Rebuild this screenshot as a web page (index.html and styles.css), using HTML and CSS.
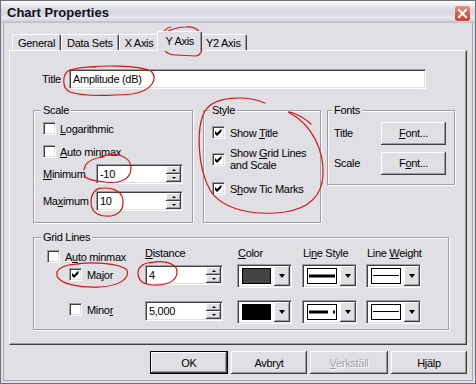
FILE: index.html
```html
<!DOCTYPE html>
<html>
<head>
<meta charset="utf-8">
<title>Chart Properties</title>
<link rel="stylesheet" href="styles.css">
</head>
<body>
<div class="window">
  <div class="titlebar">
    <span class="title">Chart Properties</span>
    <span class="close">
      <svg width="17" height="17" viewBox="0 0 17 17">
        <defs>
          <linearGradient id="cg" x1="0" y1="0" x2="0" y2="1">
            <stop offset="0" stop-color="#e9988a"/>
            <stop offset="0.5" stop-color="#d2604e"/>
            <stop offset="1" stop-color="#c0442f"/>
          </linearGradient>
        </defs>
        <rect x="0.5" y="0.5" width="16" height="16" rx="3" fill="url(#cg)" stroke="#f2e6e6"/>
        <path d="M5 5 L12 12 M12 5 L5 12" stroke="#fff" stroke-width="2" stroke-linecap="square"/>
      </svg>
    </span>
  </div>
  <div class="client">
    <div class="tabs">
      <div class="tab">General</div>
      <div class="tab">Data Sets</div>
      <div class="tab">X Axis</div>
      <div class="tab active">Y Axis</div>
      <div class="tab">Y2 Axis</div>
    </div>
    <div class="panel">
      <div class="title-row">
        <span class="title-label">Title</span>
        <div class="field title-field">Amplitude (dB)</div>
      </div>
      <div class="groups">
        <div class="group scale">
          <div class="legend">Scale</div>
          <div class="group-body">
            <div class="check-row log"><span class="cb"></span><span><u>L</u>ogarithmic</span></div>
            <div class="check-row auto"><span class="cb"></span><span><u>A</u>uto minmax</span></div>
            <div class="num-row min"><span class="num-label"><u>M</u>inimum</span>
              <div class="field spinfield">-10<span class="spin"><span><i class="up"></i></span><span><i class="down"></i></span></span></div>
            </div>
            <div class="num-row max"><span class="num-label">Ma<u>x</u>imum</span>
              <div class="field spinfield">10<span class="spin"><span><i class="up"></i></span><span><i class="down"></i></span></span></div>
            </div>
          </div>
        </div>
        <div class="group style">
          <div class="legend">Style</div>
          <div class="group-body">
            <div class="check-row s1"><span class="cb checked"><svg width="11" height="11" viewBox="0 0 11 11"><polygon points="2,4 4,6 8.5,1.5 8.5,4.5 4,9 2,7"/></svg></span><span>Show <u>T</u>itle</span></div>
            <div class="check-row s2"><span class="cb checked"><svg width="11" height="11" viewBox="0 0 11 11"><polygon points="2,4 4,6 8.5,1.5 8.5,4.5 4,9 2,7"/></svg></span><span class="two-line">Show <u>G</u>rid Lines<br>and Scale</span></div>
            <div class="check-row s3"><span class="cb checked"><svg width="11" height="11" viewBox="0 0 11 11"><polygon points="2,4 4,6 8.5,1.5 8.5,4.5 4,9 2,7"/></svg></span><span>S<u>h</u>ow Tic Marks</span></div>
          </div>
        </div>
        <div class="group fonts">
          <div class="legend">Fonts</div>
          <div class="group-body">
            <div class="font-row f1"><span class="font-label">Title</span><div class="btn font-btn"><span><u>F</u>ont...</span></div></div>
            <div class="font-row f2"><span class="font-label">Scale</span><div class="btn font-btn"><span>F<u>o</u>nt...</span></div></div>
          </div>
        </div>
      </div>
      <div class="group gridlines">
        <div class="legend">Grid Lines</div>
        <div class="grid-table">
          <div class="check-row hdr-auto"><span class="cb"></span><span>A<u>u</u>to minmax</span></div>
          <div class="hdr"><u>D</u>istance</div>
          <div class="hdr hdr-pad"><u>C</u>olor</div>
          <div class="hdr hdr-pad">Li<u>n</u>e Style</div>
          <div class="hdr hdr-pad">Line <u>W</u>eight</div>

          <div class="check-row major"><span class="cb checked"><svg width="11" height="11" viewBox="0 0 11 11"><polygon points="2,4 4,6 8.5,1.5 8.5,4.5 4,9 2,7"/></svg></span><span>Major</span></div>
          <div class="field spinfield dist">4<span class="spin"><span><i class="up"></i></span><span><i class="down"></i></span></span></div>
          <div class="combo"><span class="swatch dark"></span><span class="drop"><i></i></span></div>
          <div class="combo"><span class="item"><svg width="28" height="14" viewBox="0 0 28 14"><rect x="1" y="5.5" width="26" height="3" fill="#000"/></svg></span><span class="drop"><i></i></span></div>
          <div class="combo"><span class="item"><svg width="28" height="14" viewBox="0 0 28 14"><rect x="1" y="6" width="26" height="1" fill="#000"/></svg></span><span class="drop"><i></i></span></div>

          <div class="check-row minor"><span class="cb"></span><span>Mino<u>r</u></span></div>
          <div class="field spinfield dist">5,000<span class="spin"><span><i class="up"></i></span><span><i class="down"></i></span></span></div>
          <div class="combo"><span class="swatch black"></span><span class="drop"><i></i></span></div>
          <div class="combo"><span class="item"><svg width="28" height="14" viewBox="0 0 28 14"><rect x="1" y="5.5" width="19" height="3" fill="#000"/><rect x="25" y="5.5" width="2" height="3" fill="#000"/></svg></span><span class="drop"><i></i></span></div>
          <div class="combo"><span class="item"><svg width="28" height="14" viewBox="0 0 28 14"><rect x="1" y="6" width="26" height="1" fill="#000"/></svg></span><span class="drop"><i></i></span></div>
        </div>
      </div>
    </div>
    <div class="buttons">
      <div class="btn default ok">OK</div>
      <div class="btn cancel">Avbryt</div>
      <div class="btn apply disabled"><span><u>V</u>erkställ</span></div>
      <div class="btn help">Hjälp</div>
    </div>
  </div>
</div>
<svg class="annotations" width="476" height="384" viewBox="0 0 476 384">
  <g fill="none" stroke="#d01818" stroke-width="1.2" stroke-linecap="round">
    <path d="M171,27 C164,28 161,35 162,43 C163,51 168,55 176,55 L196,56 C202,55 204,46 202,37 C200,30 194,26 186,27 C180,27 175,28 168,31"/>
    <path d="M78,68 C100,65 138,65 151,71 C158,78 153,91 132,94 C108,96 82,96 70,92 C62,88 62,76 68,71 C74,68 84,67 96,67"/>
    <path d="M265,103 C246,95 214,96 205,111 C196,127 197,166 210,190 C222,210 255,216 285,212 C310,208 322,195 323,175 C324,150 312,125 290,113 C284,110 299,113 311,124"/>
    <path d="M100,157 C115,151 131,156 131,168 C131,180 119,184 105,182 C93,181 86,178 84,176 M84,170 C85,163 92,158 104,157"/>
    <path d="M97,189 C110,186 122,190 123,200 C124,212 116,217 105,216 C95,215 91,210 91,202 C91,195 94,190 100,188"/>
    <path d="M70,265 C90,261 120,263 127,270 C130,278 120,286 100,287 C80,288 60,284 57,276 C55,268 66,264 80,264"/>
    <path d="M150,263 C165,259 178,264 177,273 C176,282 165,286 152,285 C142,284 138,279 138,273 C138,266 145,262 155,262"/>
  </g>
</svg>
</body>
</html>
```
FILE: styles.css
```css
* { box-sizing: border-box; }
html, body { margin: 0; padding: 0; }
body {
  position: relative;
  width: 476px;
  height: 384px;
  overflow: hidden;
  background: #e0dfe3;
  font-family: "Liberation Sans", Arial, sans-serif;
  font-size: 11px;
  letter-spacing: -0.3px;
  color: #000;
}
u { text-decoration: underline; text-underline-offset: 1px; }

.window {
  width: 476px;
  height: 384px;
  border: 1px solid #6e6e80;
  background: #e0dfe3;
  display: flex;
  flex-direction: column;
}

.titlebar {
  height: 22px;
  flex: none;
  display: flex;
  justify-content: space-between;
  align-items: center;
  padding: 0 4px 0 6px;
  background: linear-gradient(to bottom, #ffffff 0%, #f2f2f6 12%, #dedee6 35%, #d6d6de 55%, #e6e6ec 75%, #d8d8e0 88%, #b8b8c6 100%);
}
.title {
  font-weight: bold;
  font-size: 13px;
  letter-spacing: 0;
  color: #111118;
  padding-top: 1px;
}
.close {
  align-self: flex-start;
  margin-top: 4px;
  width: 17px;
  height: 17px;
  display: block;
}
.close svg { display: block; }

.client {
  flex: 1;
  margin: 0 2px 2px;
  border: 1px solid #a4a4b2;
  border-top: none;
  padding: 8px 5px 5px;
  display: flex;
  flex-direction: column;
}

/* tabs */
.tabs {
  display: flex;
  height: 19px;
  padding-left: 3px;
  position: relative;
  z-index: 1;
}
.tab {
  height: 16px;
  margin-top: 3px;
  padding: 0 5px;
  display: flex;
  align-items: center;
  background: #e0dfe3;
  border-top: 1px solid #fff;
  border-left: 1px solid #fff;
  border-right: 1px solid #404040;
  box-shadow: inset -1px 0 0 #9d9da1;
  border-radius: 2px 2px 0 0;
}
.tab.active {
  height: 20px;
  margin: 0 -2px -1px;
  padding: 0 7px 1px;
  position: relative;
  z-index: 2;
}

.panel {
  height: 295px;
  flex: none;
  border: 1px solid;
  border-color: #fff #404040 #404040 #fff;
  box-shadow: inset -1px -1px 0 #9d9da1;
  padding: 18px 0 0 23px;
}

/* sunken field */
.field {
  background: #fff;
  border: 1px solid;
  border-color: #9d9da1 #fff #fff #9d9da1;
  box-shadow: inset 1px 1px 0 #404040, inset -1px -1px 0 #e0dfe3;
  display: flex;
  align-items: center;
  padding: 0 2px 0 3px;
  height: 20px;
}

.title-row {
  display: flex;
  align-items: center;
  padding-left: 9px;
}
.title-label { width: 27px; }
.title-field { width: 357px; }

.groups {
  display: flex;
  align-items: flex-start;
  margin-top: 21px;
}

.group {
  border: 1px solid #9d9da1;
  box-shadow: inset 1px 1px 0 #fff, 1px 1px 0 #fff;
}
.legend {
  display: table;
  margin: -7px 0 0 7px;
  padding: 0 2px;
  line-height: 13px;
  height: 13px;
  background: #e0dfe3;
}

.scale { width: 160px; height: 113px; margin-right: 10px; }
.scale .group-body { padding-left: 9px; }
.style { width: 118px; height: 113px; margin-right: 6px; }
.style .legend { margin-left: 6px; }
.style .group-body { padding-left: 8px; }
.fonts { width: 128px; height: 75px; }
.fonts .legend { margin-left: 4px; }
.fonts .group-body { padding-left: 6px; }

.check-row {
  display: flex;
  align-items: center;
  gap: 5px;
  height: 13px;
}
.cb {
  flex: none;
  width: 13px;
  height: 13px;
  background: #fff;
  border: 1px solid;
  border-color: #9d9da1 #fff #fff #9d9da1;
  box-shadow: inset 1px 1px 0 #404040, inset -1px -1px 0 #e0dfe3;
  display: block;
}
.cb svg { display: block; fill: #000; }

.scale .log { margin-top: 5px; gap: 4px; }
.scale .auto { margin-top: 10px; gap: 4px; }
.num-row { display: flex; align-items: center; }
.num-row.min { margin-top: 6px; }
.num-row.max { margin-top: 7px; }
.num-label { width: 53px; }
.spinfield { width: 87px; padding-right: 1px; }

.spin {
  margin-left: auto;
  width: 15px;
  align-self: stretch;
  margin-top: 1px;
  margin-bottom: 1px;
  display: flex;
  flex-direction: column;
}
.spin > span {
  flex: 1;
  background: #e0dfe3;
  box-shadow: inset -1px -1px 0 #404040, inset 1px 1px 0 #fff, inset -2px -2px 0 #9d9da1;
  display: flex;
  align-items: center;
  justify-content: center;
}
.spin i { display: block; width: 0; height: 0; border-left: 2px solid transparent; border-right: 2px solid transparent; }
.spin i.up { border-bottom: 2px solid #000; }
.spin i.down { border-top: 2px solid #000; }

.style .s1 { margin-top: 9px; }
.style .s2 { margin-top: 8px; height: 24px; }
.style .s3 { margin-top: 11px; }
.two-line { line-height: 12px; }

.font-row { display: flex; align-items: center; height: 22px; }
.font-row.f1 { margin-top: 5px; }
.font-row.f2 { margin-top: 8px; }
.font-label { width: 47px; }
.font-btn { width: 65px; height: 22px; }

/* buttons */
.btn {
  height: 23px;
  background: #e0dfe3;
  box-shadow: inset -1px -1px 0 #404040, inset 1px 1px 0 #fff, inset -2px -2px 0 #9d9da1;
  display: flex;
  align-items: center;
  justify-content: center;
}
.btn.default {
  box-shadow: inset 0 0 0 1px #000, inset -2px -2px 0 #404040, inset 2px 2px 0 #fff, inset -3px -3px 0 #9d9da1;
}
.btn.disabled { color: #a2a2a6; text-shadow: 1px 1px 0 #fff; }

.buttons {
  display: flex;
  justify-content: flex-end;
  gap: 3px;
  margin-top: 6px;
}
.ok { width: 78px; }
.cancel { width: 76px; }
.apply { width: 78px; }
.help { width: 76px; }

/* grid lines group */
.gridlines {
  width: 416px;
  height: 93px;
  margin-top: 14px;
}
.grid-table {
  display: grid;
  grid-template-columns: 98px 92px 65px 64px 64px;
  grid-template-rows: 17px 36px 24px;
  margin-top: 3px;
  padding-left: 13px;
  align-items: start;
}
.hdr { line-height: 13px; }
.hdr-pad { padding-left: 1px; }
.hdr-auto { align-self: end; margin-bottom: 1px; }
.major { padding-left: 22px; margin-top: 4px; }
.minor { padding-left: 22px; margin-top: 3px; }
.dist { width: 78px; margin-top: 1px; }

.combo {
  width: 55px;
  height: 24px;
  background: #fff;
  border: 1px solid;
  border-color: #9d9da1 #fff #fff #9d9da1;
  box-shadow: inset 1px 1px 0 #404040, inset -1px -1px 0 #e0dfe3;
  display: flex;
  align-items: center;
  gap: 3px;
  padding: 0 1px 0 4px;
}
.swatch {
  flex: 1;
  height: 16px;
  border: 1px solid #000;
}
.swatch.dark { background: #434343; }
.swatch.black { background: #000; }
.item {
  flex: 1;
  height: 16px;
  border: 1px solid #000;
  background: #fff;
  display: block;
}
.item svg { display: block; }
.drop {
  width: 16px;
  flex: none;
  align-self: stretch;
  margin: 1px 0;
  background: #e0dfe3;
  box-shadow: inset -1px -1px 0 #404040, inset 1px 1px 0 #fff, inset -2px -2px 0 #9d9da1;
  display: flex;
  align-items: center;
  justify-content: center;
}
.drop i {
  display: block;
  width: 0;
  height: 0;
  border-left: 3px solid transparent;
  border-right: 3px solid transparent;
  border-top: 4px solid #000;
}

.annotations {
  position: absolute;
  left: 0;
  top: 0;
  pointer-events: none;
}
```
